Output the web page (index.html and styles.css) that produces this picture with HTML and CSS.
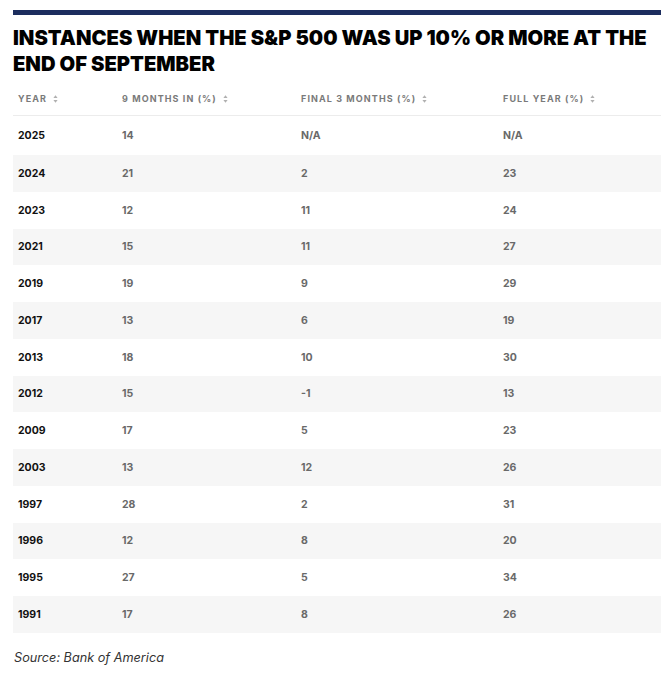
FILE: index.html
```html
<!DOCTYPE html>
<html>
<head>
<meta charset="utf-8">
<link rel="stylesheet" href="styles.css">
</head>
<body>
<div class="wrap">
  <div class="bar"></div>
  <h1 class="title">INSTANCES WHEN THE S&amp;P 500 WAS UP 10% OR MORE AT THE END OF SEPTEMBER</h1>
  <table class="data">
    <thead>
      <tr>
        <th class="c1">YEAR<span class="sort"><svg width="5" height="8" viewBox="0 0 5 8"><path d="M2.5 0.3L4.6 3.1H0.4Z M2.5 7.7L4.6 4.9H0.4Z" fill="#b0b0b0"/></svg></span></th>
        <th class="c2">9 MONTHS IN (%)<span class="sort"><svg width="5" height="8" viewBox="0 0 5 8"><path d="M2.5 0.3L4.6 3.1H0.4Z M2.5 7.7L4.6 4.9H0.4Z" fill="#b0b0b0"/></svg></span></th>
        <th class="c3">FINAL 3 MONTHS (%)<span class="sort"><svg width="5" height="8" viewBox="0 0 5 8"><path d="M2.5 0.3L4.6 3.1H0.4Z M2.5 7.7L4.6 4.9H0.4Z" fill="#b0b0b0"/></svg></span></th>
        <th class="c4">FULL YEAR (%)<span class="sort"><svg width="5" height="8" viewBox="0 0 5 8"><path d="M2.5 0.3L4.6 3.1H0.4Z M2.5 7.7L4.6 4.9H0.4Z" fill="#b0b0b0"/></svg></span></th>
      </tr>
    </thead>
    <tbody>
      <tr class="first"><td class="yr">2025</td><td>14</td><td>N/A</td><td>N/A</td></tr>
      <tr><td class="yr">2024</td><td>21</td><td>2</td><td>23</td></tr>
      <tr><td class="yr">2023</td><td>12</td><td>11</td><td>24</td></tr>
      <tr><td class="yr">2021</td><td>15</td><td>11</td><td>27</td></tr>
      <tr><td class="yr">2019</td><td>19</td><td>9</td><td>29</td></tr>
      <tr><td class="yr">2017</td><td>13</td><td>6</td><td>19</td></tr>
      <tr><td class="yr">2013</td><td>18</td><td>10</td><td>30</td></tr>
      <tr><td class="yr">2012</td><td>15</td><td>-1</td><td>13</td></tr>
      <tr><td class="yr">2009</td><td>17</td><td>5</td><td>23</td></tr>
      <tr><td class="yr">2003</td><td>13</td><td>12</td><td>26</td></tr>
      <tr><td class="yr">1997</td><td>28</td><td>2</td><td>31</td></tr>
      <tr><td class="yr">1996</td><td>12</td><td>8</td><td>20</td></tr>
      <tr><td class="yr">1995</td><td>27</td><td>5</td><td>34</td></tr>
      <tr><td class="yr">1991</td><td>17</td><td>8</td><td>26</td></tr>
    </tbody>
  </table>
  <p class="source">Source: Bank of America</p>
</div>
</body>
</html>
```

FILE: styles.css
```css
html, body {
  margin: 0;
  padding: 0;
  background: #ffffff;
}
.wrap {
  width: 648px;
  padding: 10px 0 0 13px;
  font-family: "Inter", "Liberation Sans", sans-serif;
}
.bar {
  height: 5px;
  background: #1c2d5e;
}
.title {
  margin: 10px 0 0 0;
  font-family: "Inter", "Liberation Sans", sans-serif;
  font-weight: 900;
  font-size: 20.2px;
  line-height: 25.5px;
  color: #000;
}
.data {
  width: 648px;
  border-collapse: collapse;
  margin-top: 6px;
  table-layout: fixed;
}
.data th {
  text-align: left;
  font-size: 9px;
  font-weight: 700;
  color: #7a7a7a;
  letter-spacing: 1.1px;
  height: 33px;
  padding: 0 0 0 5px;
  border-bottom: 1px solid #ececec;
  vertical-align: middle;
  white-space: nowrap;
}
.c1 { width: 99px; }
.c2 { width: 174px; }
.c3 { width: 197px; }
.c4 { width: auto; }
.sort {
  display: inline-block;
  margin-left: 6px;
  vertical-align: -0.5px;
}
.sort svg { display: block; }
.data td {
  height: 36.75px;
  padding: 0 0 0 5px;
  font-size: 10.5px;
  font-weight: 700;
  color: #696969;
  vertical-align: middle;
}
.data tr.first td {
  height: 39px;
}
.data td.yr {
  color: #111;
}
.data tbody tr:nth-child(even) td {
  background: #f6f6f6;
}
.source {
  margin: 17px 0 0 1px;
  font-family: "Inter", "Liberation Sans", sans-serif;
  font-style: italic;
  font-size: 12.7px;
  color: #333;
}
```
